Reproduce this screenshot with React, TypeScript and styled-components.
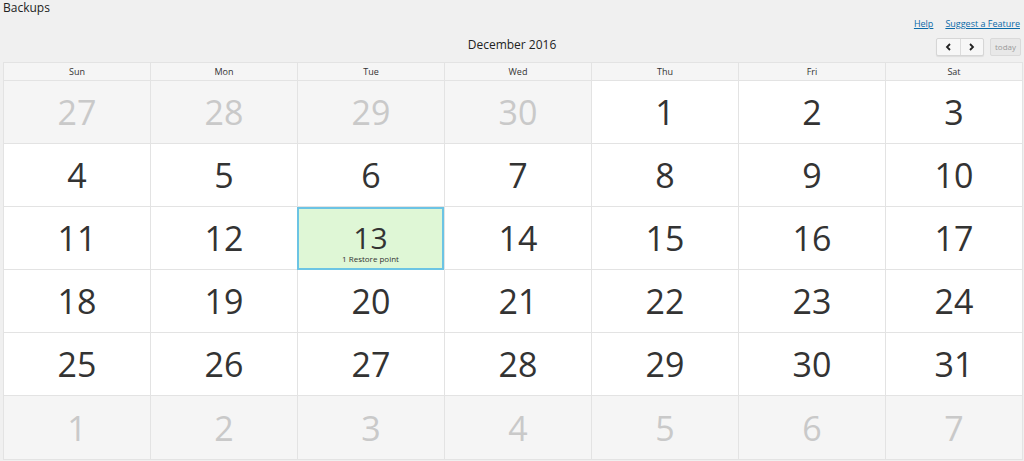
import styled, { createGlobalStyle } from "styled-components";

const GlobalStyle = createGlobalStyle`
  html, body {
    margin: 0;
    padding: 0;
    background: #f0f0f0;
    font-family: "Open Sans", "Liberation Sans", sans-serif;
    color: #333;
  }
`;

const Page = styled.div`
  width: 1024px;
  height: 461px;
  overflow: hidden;
  display: flex;
  flex-direction: column;
  padding: 0 1px 0 3px;
  box-sizing: border-box;
`;

const Title = styled.h1`
  margin: 0;
  height: 16px;
  font-size: 12px;
  line-height: 16px;
  font-weight: 400;
  color: #222;
`;

const Links = styled.div`
  display: flex;
  justify-content: flex-end;
  gap: 12px;
  height: 14px;
  padding: 1px 3px 0 0;
`;

const HelpLink = styled.a`
  font-size: 9px;
  line-height: 14px;
  color: #0a6aa8;
  text-decoration: underline;
`;

const Toolbar = styled.div`
  display: grid;
  grid-template-columns: 1fr auto 1fr;
  align-items: center;
  height: 31px;
  padding-right: 2px;
`;

const MonthTitle = styled.h2`
  grid-column: 2;
  margin: 0 0 5px;
  font-size: 12px;
  font-weight: 400;
  color: #222;
`;

const Controls = styled.div`
  grid-column: 3;
  justify-self: end;
  display: flex;
  gap: 6px;
`;

const ButtonGroup = styled.div`
  display: flex;
  border: 1px solid #d6d6d6;
  border-radius: 2px;
  background: #f7f7f7;
  box-shadow: 0 1px 1px rgba(0, 0, 0, 0.08);
`;

const NavButton = styled.button<{ $first?: boolean }>`
  width: 23px;
  height: 16px;
  padding: 0;
  border: 0;
  border-left: ${(p) => (p.$first ? "0" : "1px solid #dcdcdc")};
  background: transparent;
  display: flex;
  align-items: center;
  justify-content: center;
`;

const TodayButton = styled.button`
  height: 18px;
  padding: 0 4px;
  border: 1px solid #dadada;
  border-radius: 2px;
  background: #e8e8e8;
  color: #9a9a9a;
  font-family: inherit;
  font-size: 8px;
`;

const Calendar = styled.div`
  display: grid;
  grid-template-columns: repeat(6, 147px) 1fr;
  grid-template-rows: 18px repeat(6, 1fr);
  flex: 1;
  border: 1px solid #e3e3e3;
  background: #fff;
  margin-bottom: 1px;
`;

const DayName = styled.div<{ $last?: boolean }>`
  background: #f5f5f5;
  border-right: ${(p) => (p.$last ? "0" : "1px solid #e3e3e3")};
  border-bottom: 1px solid #e3e3e3;
  font-size: 9px;
  display: flex;
  align-items: center;
  justify-content: center;
  color: #333;
`;

const DayCell = styled.div<{ $muted?: boolean; $last?: boolean; $bottom?: boolean }>`
  position: relative;
  display: flex;
  flex-direction: column;
  align-items: center;
  justify-content: center;
  background: ${(p) => (p.$muted ? "#f5f5f5" : "#fff")};
  color: ${(p) => (p.$muted ? "#c9c9c9" : "#333")};
  border-right: ${(p) => (p.$last ? "0" : "1px solid #e3e3e3")};
  border-bottom: ${(p) => (p.$bottom ? "0" : "1px solid #e3e3e3")};
  font-size: 34px;
  line-height: 1;
`;

const Highlight = styled.div`
  position: absolute;
  inset: 0 0 -1px -1px;
  background: #dff7d6;
  border: 2px solid #6cc4e4;
  display: flex;
  flex-direction: column;
  align-items: center;
  justify-content: flex-start;
  padding-top: 13px;
`;

const HighlightNumber = styled.span`
  font-size: 30px;
  line-height: 32px;
  color: #333;
`;

const RestoreLabel = styled.span`
  font-size: 8px;
  line-height: 10px;
  color: #333;
`;

const Chevron = ({ dir }: { dir: "left" | "right" }) => (
  <svg width="7" height="8" viewBox="0 0 7 8">
    <path
      d={dir === "left" ? "M5 1 L2 4 L5 7" : "M2 1 L5 4 L2 7"}
      fill="none"
      stroke="#222"
      strokeWidth="1.8"
    />
  </svg>
);

const dayNames = ["Sun", "Mon", "Tue", "Wed", "Thu", "Fri", "Sat"];

type Day = { n: number; muted: boolean };

const days: Day[] = [
  ...[27, 28, 29, 30].map((n) => ({ n, muted: true })),
  ...Array.from({ length: 31 }, (_, i) => ({ n: i + 1, muted: false })),
  ...[1, 2, 3, 4, 5, 6, 7].map((n) => ({ n, muted: true })),
];

export default function App() {
  return (
    <>
      <GlobalStyle />
      <Page>
        <Title>Backups</Title>
        <Links>
          <HelpLink href="#">Help</HelpLink>
          <HelpLink href="#">Suggest a Feature</HelpLink>
        </Links>
        <Toolbar>
          <MonthTitle>December 2016</MonthTitle>
          <Controls>
            <ButtonGroup>
              <NavButton $first>
                <Chevron dir="left" />
              </NavButton>
              <NavButton>
                <Chevron dir="right" />
              </NavButton>
            </ButtonGroup>
            <TodayButton>today</TodayButton>
          </Controls>
        </Toolbar>
        <Calendar>
          {dayNames.map((d, i) => (
            <DayName key={d} $last={i === 6}>
              {d}
            </DayName>
          ))}
          {days.map((d, i) => (
            <DayCell
              key={i}
              $muted={d.muted}
              $last={i % 7 === 6}
              $bottom={i >= 35}
            >
              {!d.muted && d.n === 13 ? (
                <Highlight>
                  <HighlightNumber>13</HighlightNumber>
                  <RestoreLabel>1 Restore point</RestoreLabel>
                </Highlight>
              ) : (
                d.n
              )}
            </DayCell>
          ))}
        </Calendar>
      </Page>
    </>
  );
}
